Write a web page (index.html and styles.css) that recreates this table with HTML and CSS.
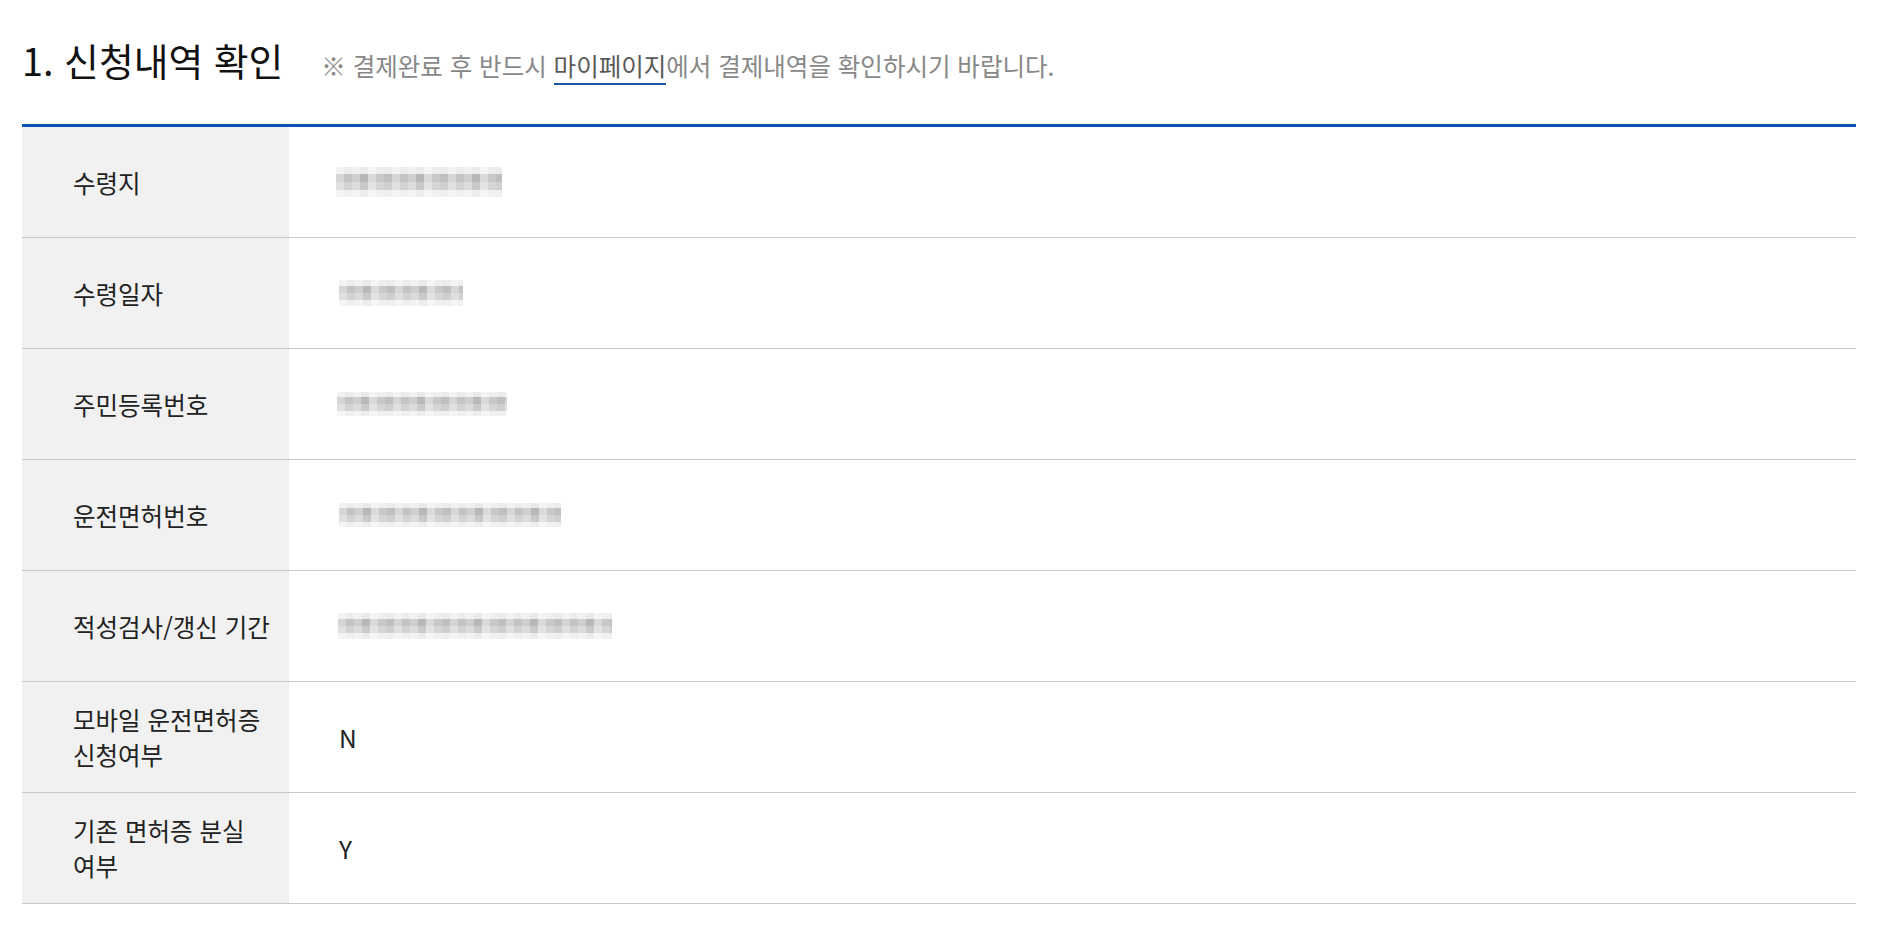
FILE: index.html
```html
<!DOCTYPE html>
<html lang="ko">
<head>
<meta charset="utf-8">
<title>신청내역 확인</title>
<link rel="stylesheet" href="styles.css">
</head>
<body>
<div class="page">
  <div class="title-row">
    <h2 class="title">1. 신청내역 확인</h2>
    <p class="notice">※ 결제완료 후 반드시 <a class="link">마이페이지</a>에서 결제내역을 확인하시기 바랍니다.</p>
  </div>
  <div class="info">
    <div class="row">
      <div class="th">수령지</div>
      <div class="td"><span class="mosaic m1"></span></div>
    </div>
    <div class="row">
      <div class="th">수령일자</div>
      <div class="td"><span class="mosaic m2"></span></div>
    </div>
    <div class="row">
      <div class="th">주민등록번호</div>
      <div class="td"><span class="mosaic m3"></span></div>
    </div>
    <div class="row">
      <div class="th">운전면허번호</div>
      <div class="td"><span class="mosaic m4"></span></div>
    </div>
    <div class="row">
      <div class="th">적성검사/갱신 기간</div>
      <div class="td"><span class="mosaic m5"></span></div>
    </div>
    <div class="row">
      <div class="th">모바일 운전면허증 신청여부</div>
      <div class="td">N</div>
    </div>
    <div class="row">
      <div class="th">기존 면허증 분실 여부</div>
      <div class="td">Y</div>
    </div>
  </div>
</div>
</body>
</html>
```

FILE: styles.css
```css
html, body {
  margin: 0;
  padding: 0;
  background: #ffffff;
}
body {
  font-family: "Noto Sans CJK KR", "Noto Sans", sans-serif;
  color: #222222;
}
.page {
  padding: 35px 37px 0 22px;
}
.title-row {
  display: flex;
  align-items: baseline;
  gap: 38px;
  height: 50px;
  margin-bottom: 39px;
}
.title {
  margin: 0;
  font-size: 37.8px;
  line-height: 50px;
  font-weight: 400;
  color: #111111;
}
.notice {
  margin: 0;
  font-size: 24.5px;
  line-height: 30px;
  color: #888888;
}
.link {
  color: #5a5a5a;
  border-bottom: 2px solid #1f56a8;
  padding-bottom: 0;
}
.info {
  border-top: 3px solid #0b52b5;
}
.row {
  display: grid;
  grid-template-columns: 267px 1fr;
  min-height: 110px;
  border-bottom: 1px solid #c9c9c9;
}
.th {
  background: #f1f1f1;
  display: flex;
  align-items: center;
  padding: 0 10px 0 51px;
  font-size: 24.5px;
  line-height: 35px;
  color: #222222;
  word-break: keep-all;
}
.td {
  display: flex;
  align-items: center;
  padding-left: 50px;
  font-size: 24.5px;
  line-height: 35px;
  color: #222222;
}
.mosaic {
  display: inline-block;
  height: 30px;
  background:
    linear-gradient(to bottom, rgba(255,255,255,0.7) 0 22%, rgba(255,255,255,0) 22% 50%, rgba(255,255,255,0.25) 50% 78%, rgba(255,255,255,0.75) 78% 100%),
    repeating-linear-gradient(90deg, #d6d6d6 0 8px, #c4c4c4 8px 16px, #cfcfcf 16px 24px, #b8b8b8 24px 32px, #dadada 32px 40px, #c8c8c8 40px 48px, #bfbfbf 48px 56px);
}
.m1 { width: 166px; margin-left: -3px; }
.m2 { width: 124px; height: 26px; }
.m3 { width: 170px; height: 24px; margin-left: -2px; }
.m4 { width: 222px; height: 24px; }
.m5 { width: 274px; height: 26px; margin-left: -1px; }
```
